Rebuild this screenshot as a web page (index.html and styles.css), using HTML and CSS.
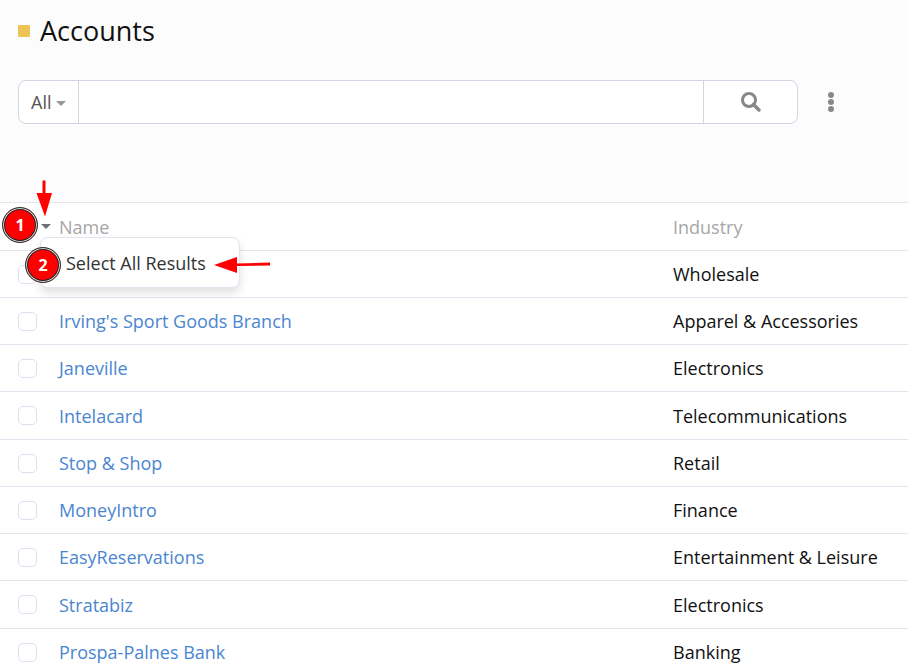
FILE: index.html
```html
<!DOCTYPE html>
<html lang="en">
<head>
<meta charset="utf-8">
<title>Accounts</title>
<link rel="stylesheet" href="styles.css">
</head>
<body>
<header class="page-header">
  <span class="scope-color"></span>
  <h1 class="page-title">Accounts</h1>
</header>
<form class="search-row" role="search">
  <div class="search-group">
    <div class="filter">
      <select class="filter-select" aria-label="Filter">
        <option>All</option>
      </select>
    </div>
    <input class="search-input" type="text" aria-label="Search">
    <button class="search-button" type="button" aria-label="Search">
      <svg width="20" height="20" viewBox="0 0 20 20" fill="none" stroke="currentColor" stroke-width="3"><circle cx="8" cy="8" r="6.5"/><path d="M12.5 12.5l5.5 5.5" stroke-width="3.5" stroke-linecap="round"/></svg>
    </button>
  </div>
  <button class="more-button" type="button" aria-label="More actions">
    <svg width="6" height="20" viewBox="0 0 6 20" fill="currentColor"><circle cx="3" cy="3" r="3"/><circle cx="3" cy="10" r="3"/><circle cx="3" cy="17" r="3"/></svg>
  </button>
</form>
<main class="list">
  <table class="list-table">
    <thead>
      <tr>
        <th class="cell-check">
          <button class="caret-button" type="button" aria-label="Selection menu"></button>
          <div class="menu"><button class="menu-item" type="button">Select All Results</button></div>
          <svg class="arrow arrow-down" width="18" height="38" viewBox="0 0 18 38"><path d="M7.5 0.5h3V13H17L10 36.5 1.500 13h6z" fill="#f00"/></svg>
          <svg class="arrow arrow-left" width="58" height="18" viewBox="0 0 58 18"><path d="M0 9l23-8v6.500l33-1v3l-33 .5V17z" fill="#f00"/></svg>
          <span class="step step-one">1</span>
          <span class="step step-two">2</span>
        </th>
        <th class="cell-name">Name</th>
        <th class="cell-industry">Industry</th>
      </tr>
    </thead>
    <tbody>
      <tr><td class="cell-check"><input class="check" type="checkbox" aria-label="Select record"></td><td></td><td>Wholesale</td></tr>
      <tr><td class="cell-check"><input class="check" type="checkbox" aria-label="Select Irving's Sport Goods Branch"></td><td><a class="link" href="#">Irving's Sport Goods Branch</a></td><td>Apparel &amp; Accessories</td></tr>
      <tr><td class="cell-check"><input class="check" type="checkbox" aria-label="Select Janeville"></td><td><a class="link" href="#">Janeville</a></td><td>Electronics</td></tr>
      <tr><td class="cell-check"><input class="check" type="checkbox" aria-label="Select Intelacard"></td><td><a class="link" href="#">Intelacard</a></td><td>Telecommunications</td></tr>
      <tr><td class="cell-check"><input class="check" type="checkbox" aria-label="Select Stop &amp; Shop"></td><td><a class="link" href="#">Stop &amp; Shop</a></td><td>Retail</td></tr>
      <tr><td class="cell-check"><input class="check" type="checkbox" aria-label="Select MoneyIntro"></td><td><a class="link" href="#">MoneyIntro</a></td><td>Finance</td></tr>
      <tr><td class="cell-check"><input class="check" type="checkbox" aria-label="Select EasyReservations"></td><td><a class="link" href="#">EasyReservations</a></td><td>Entertainment &amp; Leisure</td></tr>
      <tr><td class="cell-check"><input class="check" type="checkbox" aria-label="Select Stratabiz"></td><td><a class="link" href="#">Stratabiz</a></td><td>Electronics</td></tr>
      <tr><td class="cell-check"><input class="check" type="checkbox" aria-label="Select Prospa-Palnes Bank"></td><td><a class="link" href="#">Prospa-Palnes Bank</a></td><td>Banking</td></tr>
    </tbody>
  </table>
</main>
</body>
</html>
```
FILE: styles.css
```css
* { box-sizing: border-box; }

html { scrollbar-width: none; }

body {
  margin: 0;
  background: #fcfcfc;
  color: #111;
  font: 18px/24px "Open Sans", sans-serif;
}

button, input, select { font: inherit; color: inherit; }

button {
  padding: 0;
  border: 0;
  background: none;
}

.page-header {
  display: flex;
  align-items: center;
  gap: 10px;
  height: 62px;
  padding: 0 18px;
}

.scope-color {
  width: 12px;
  height: 12px;
  border-radius: 1px;
  background: #edc555;
}

.page-title {
  margin: 0;
  font-size: 27px;
  line-height: 36px;
  font-weight: 400;
}

.search-row {
  display: flex;
  align-items: center;
  gap: 24px;
  margin: 18px 68px 78px 18px;
}

.search-group {
  display: flex;
  flex: 1;
  height: 44px;
  overflow: hidden;
  border: 1px solid #d1d5e3;
  border-radius: 8px;
  background: #fff;
}

.filter {
  position: relative;
  display: flex;
  border-right: 1px solid #d1d5e3;
}

.filter-select {
  appearance: none;
  width: 59px;
  padding: 0 12px;
  border: 0;
  background: none;
  color: #555;
}

.filter::after {
  content: "";
  position: absolute;
  top: 20px;
  right: 12px;
  border: 5px solid transparent;
  border-top-color: #999;
  border-bottom: 0;
  pointer-events: none;
}

.search-input {
  flex: 1;
  min-width: 0;
  padding: 0 12px;
  border: 0;
}

.search-button {
  display: flex;
  align-items: center;
  justify-content: center;
  width: 94px;
  border-left: 1px solid #d1d5e3;
  color: #888;
}

.more-button {
  display: flex;
  justify-content: center;
  width: 18px;
  color: #888;
}

.list {
  border-top: 1px solid #e3e4ef;
  background: #fff;
}

.list-table {
  width: 100%;
  table-layout: fixed;
  border-collapse: separate;
  border-spacing: 0;
}

th, td {
  height: 47px;
  padding: 0;
  border-bottom: 1px solid #e3e4ef;
  text-align: left;
  font-weight: 400;
}

th {
  height: 48px;
  color: #a6a6a6;
}

/* Rows average a quarter pixel over 47px. */
tbody tr:nth-child(4n) td { height: 48px; }

.cell-check {
  position: relative;
  width: 59px;
  padding-left: 18px;
}

.cell-industry { width: 235px; }

.link {
  color: #4a86d0;
  text-decoration: none;
}

.check {
  appearance: none;
  display: block;
  width: 19px;
  height: 19px;
  margin: 0;
  border: 1px solid #dcdff0;
  border-radius: 5px;
  background: #fff;
}

.caret-button {
  display: block;
  margin-left: 23px;
  border: 5px solid transparent;
  border-top-color: #6f6f78;
  border-bottom: 0;
}

.menu {
  position: absolute;
  z-index: 1;
  top: 34px;
  left: 40px;
  width: 200px;
  padding: 13px 0 12px;
  border: 1px solid #e3e4ef;
  border-radius: 8px;
  background: #fff;
  box-shadow: 0 5px 10px rgb(0 0 0 / 12%);
}

.menu-item {
  display: block;
  width: 100%;
  padding-left: 25px;
  color: #333;
  text-align: left;
  white-space: nowrap;
}

.arrow, .step {
  position: absolute;
  z-index: 2;
}

.arrow-down { top: -23px; left: 35px; }

.arrow-left { top: 53px; left: 214px; }

.step {
  width: 36px;
  height: 36px;
  border: 1px solid #333;
  border-radius: 50%;
  background: #f00;
  box-shadow: inset 0 0 0 1px #ddd, inset 0 0 0 2px #222;
  color: #fff;
  font-size: 16px;
  line-height: 34px;
  font-weight: 700;
  text-align: center;
}

.step-one { top: 4px; left: 2px; }

.step-two { top: 44px; left: 25px; }
```
